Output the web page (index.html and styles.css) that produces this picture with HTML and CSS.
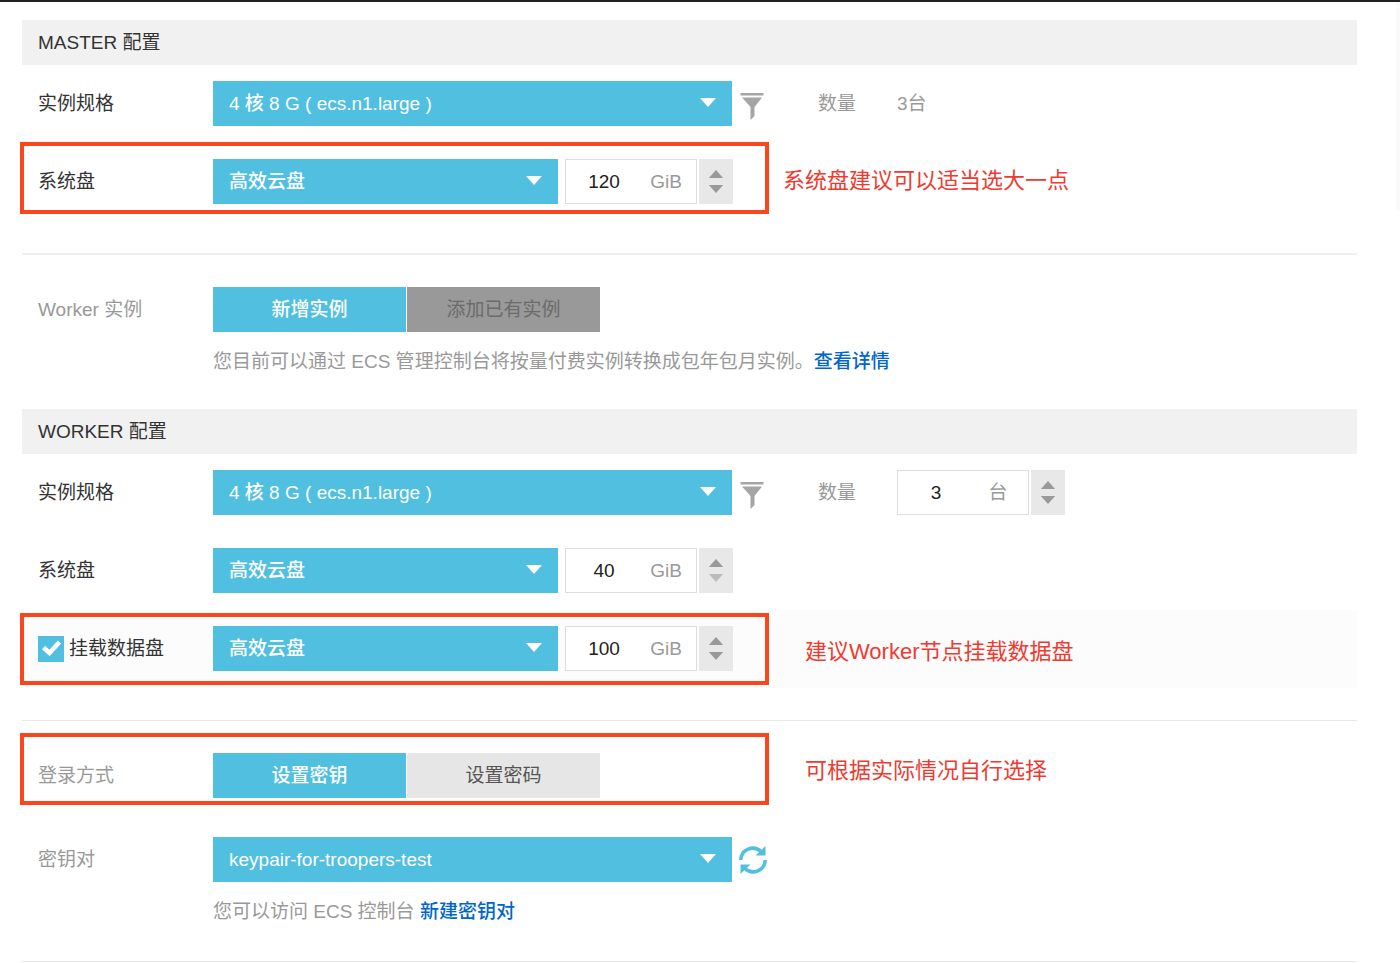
FILE: index.html
```html
<!DOCTYPE html>
<html lang="zh-CN">
<head>
<meta charset="utf-8">
<meta name="viewport" content="width=device-width, initial-scale=1">
<title>集群配置</title>
<link rel="stylesheet" href="styles.css">
</head>
<body>
<svg class="defs" aria-hidden="true">
  <symbol id="caret" viewBox="0 0 16 9"><path d="M0 0h16L8 9z"/></symbol>
  <symbol id="caret-up" viewBox="0 0 16 9"><path d="M0 9h16L8 0z"/></symbol>
  <symbol id="funnel" viewBox="0 0 23 28"><path d="M0 0h23v2.500H0zM1.500 4.500h20l-7.500 9.500v9l-4 4V14z"/></symbol>
</svg>
<main class="page">
  <form class="form">
    <section>
      <h2 class="heading">MASTER 配置</h2>
      <div class="row">
        <label class="label" for="m-type">实例规格</label>
        <div class="select wide"><select id="m-type"><option>4 核 8 G ( ecs.n1.large )</option></select><svg class="caret"><use href="#caret"/></svg></div>
        <button type="button" class="tool" aria-label="筛选"><svg class="funnel"><use href="#funnel"/></svg></button>
        <span class="count-label">数量</span>
        <span class="count">3台</span>
      </div>
      <div class="row marked marked-upper">
        <label class="label" for="m-disk">系统盘</label>
        <div class="select"><select id="m-disk"><option>高效云盘</option></select><svg class="caret"><use href="#caret"/></svg></div>
        <div class="stepper">
          <label class="amount"><input type="text" inputmode="numeric" value="120"><span>GiB</span></label>
          <div class="spin"><button type="button" aria-label="增加"><svg><use href="#caret-up"/></svg></button><button type="button" aria-label="减少"><svg><use href="#caret"/></svg></button></div>
        </div>
        <p class="note note-near">系统盘建议可以适当选大一点</p>
      </div>
    </section>

    <section class="divided">
      <div class="row">
        <span class="label muted" id="w-mode">Worker 实例</span>
        <div class="field">
          <div class="tabs" role="group" aria-labelledby="w-mode"><button type="button" class="active">新增实例</button><button type="button" class="off" disabled>添加已有实例</button></div>
          <p class="help">您目前可以通过 ECS 管理控制台将按量付费实例转换成包年包月实例。<a href="#">查看详情</a></p>
        </div>
      </div>
    </section>

    <section>
      <h2 class="heading">WORKER 配置</h2>
      <div class="row">
        <label class="label" for="w-type">实例规格</label>
        <div class="select wide"><select id="w-type"><option>4 核 8 G ( ecs.n1.large )</option></select><svg class="caret"><use href="#caret"/></svg></div>
        <button type="button" class="tool" aria-label="筛选"><svg class="funnel"><use href="#funnel"/></svg></button>
        <label class="count-label" for="w-count">数量</label>
        <div class="stepper count">
          <label class="amount"><input id="w-count" type="text" inputmode="numeric" value="3"><span>台</span></label>
          <div class="spin"><button type="button" aria-label="增加"><svg><use href="#caret-up"/></svg></button><button type="button" aria-label="减少"><svg><use href="#caret"/></svg></button></div>
        </div>
      </div>
      <div class="row">
        <label class="label" for="w-disk">系统盘</label>
        <div class="select"><select id="w-disk"><option>高效云盘</option></select><svg class="caret"><use href="#caret"/></svg></div>
        <div class="stepper">
          <label class="amount"><input type="text" inputmode="numeric" value="40"><span>GiB</span></label>
          <div class="spin"><button type="button" aria-label="增加"><svg><use href="#caret-up"/></svg></button><button type="button" aria-label="减少" disabled><svg><use href="#caret"/></svg></button></div>
        </div>
      </div>
      <div class="row tinted marked marked-lower">
        <label class="label check"><span class="box"><input type="checkbox" checked><svg viewBox="0 0 26 26"><path d="M5.500 11.500l6 5.500L21.500 6"/></svg></span>挂载数据盘</label>
        <div class="select"><select aria-label="数据盘类型"><option>高效云盘</option></select><svg class="caret"><use href="#caret"/></svg></div>
        <div class="stepper">
          <label class="amount"><input type="text" inputmode="numeric" value="100"><span>GiB</span></label>
          <div class="spin"><button type="button" aria-label="增加"><svg><use href="#caret-up"/></svg></button><button type="button" aria-label="减少"><svg><use href="#caret"/></svg></button></div>
        </div>
        <p class="note note-low">建议Worker节点挂载数据盘</p>
      </div>
    </section>

    <section class="divided thin">
      <div class="row marked marked-top">
        <span class="label muted" id="login">登录方式</span>
        <div class="tabs" role="group" aria-labelledby="login"><button type="button" class="active">设置密钥</button><button type="button">设置密码</button></div>
        <p class="note note-far">可根据实际情况自行选择</p>
      </div>
      <div class="row key-row">
        <label class="label muted" for="key">密钥对</label>
        <div class="field">
          <div class="line">
            <div class="select wide"><select id="key"><option>keypair-for-troopers-test</option></select><svg class="caret"><use href="#caret"/></svg></div>
            <button type="button" class="tool" aria-label="刷新"><svg class="refresh" viewBox="0 0 28 28"><path class="arc" d="M1.800 14A12 12 0 0 1 22 5.500M26.200 14A12 12 0 0 1 6 22.500"/><path class="tip" d="M26.500 0v9.500H16.500zM1.500 28V18.500h10z"/></svg></button>
          </div>
          <p class="help">您可以访问 ECS 控制台 <a href="#">新建密钥对</a></p>
        </div>
      </div>
    </section>
    <hr class="end">
  </form>
</main>
</body>
</html>
```
FILE: styles.css
```css
*,
*::after {
  box-sizing: border-box;
}

body {
  margin: 0;
  background: #fff;
  color: #333;
  font: 19px/28px "Liberation Sans", "Noto Sans CJK SC", sans-serif;
}

button,
input,
select {
  margin: 0;
  padding: 0;
  border: 0;
  border-radius: 0;
  background: none;
  color: inherit;
  font: inherit;
}

p {
  margin: 0;
}

a {
  color: #06c;
  font-weight: 500;
  text-decoration: none;
}

.defs {
  position: absolute;
  width: 0;
  height: 0;
}

.page {
  position: relative;
  border-top: 2px solid #231f20;
  padding: 18px 43px 0 22px;
}

/* faint scrollbar track on the window edge */
.page::after {
  content: "";
  position: absolute;
  top: 0;
  right: 0;
  width: 4px;
  height: 208px;
  background: #fafafa;
}

.heading {
  margin: 0;
  height: 45px;
  padding-left: 16px;
  background: #f1f1f1;
  font-size: 19px;
  font-weight: 400;
  line-height: 45px;
}

.row {
  position: relative;
  display: flex;
  align-items: flex-start;
  padding: 16px 0 17px 16px;
}

.tinted {
  background: #fcfcfc;
}

.label {
  flex: none;
  width: 175px;
  height: 45px;
  line-height: 46px;
}

.muted {
  color: #999;
}

.divided {
  margin-top: 32px;
  border-top: 2px solid #f0f0f0;
  padding-top: 16px;
}

.thin {
  border-top: 1px solid #e8e8e8;
}

.select {
  position: relative;
  flex: none;
  width: 345px;
  height: 45px;
  background: #50bfe0;
}

.wide {
  width: 519px;
}

.select select {
  appearance: none;
  width: 100%;
  height: 100%;
  padding: 1px 48px 0 16px;
  color: #fff;
  font-weight: 500;
}

.caret {
  position: absolute;
  top: 17px;
  right: 16px;
  width: 16px;
  height: 9px;
  fill: #fff;
  pointer-events: none;
}

.tool {
  flex: none;
  display: flex;
  align-items: center;
  width: 86px;
  height: 45px;
  padding-left: 7px;
}

.funnel {
  width: 26px;
  height: 28px;
  margin-top: 6px;
  fill: #a5a5a5;
}

.refresh {
  width: 28px;
  height: 28px;
}

.refresh .arc {
  fill: none;
  stroke: #50bfe0;
  stroke-width: 3.500;
}

.refresh .tip {
  fill: #50bfe0;
}

.count-label {
  flex: none;
  width: 79px;
  height: 45px;
  color: #999;
  line-height: 46px;
}

span.count {
  height: 45px;
  color: #999;
  line-height: 46px;
}

.stepper {
  flex: none;
  display: flex;
  gap: 2px;
  height: 45px;
  margin-left: 7px;
}

.stepper.count {
  margin-left: 0;
}

.amount {
  display: flex;
  width: 132px;
  border: 1px solid #ddd;
  background: #fff;
  color: #999;
  line-height: 43px;
  text-align: center;
}

.amount input {
  width: 76px;
  color: #222;
  text-align: center;
}

.amount span {
  width: 48px;
}

.spin {
  display: flex;
  flex-direction: column;
  width: 34px;
  padding: 8px 0;
  background: #e8e8e8;
}

.spin button {
  flex: 1;
  display: grid;
  place-items: center;
}

.spin svg {
  width: 16px;
  height: 8px;
  fill: #999;
}

.spin button:disabled svg {
  fill: #bbb;
}

.tabs {
  display: flex;
  gap: 1px;
}

.tabs button {
  width: 193px;
  height: 45px;
  background: #e6e6e6;
  color: #555;
}

.tabs .active {
  background: #50bfe0;
  color: #fff;
  font-weight: 500;
}

.tabs .off {
  background: #999;
  color: #6b6b6b;
}

.field {
  flex: 1;
}

.line {
  display: flex;
}

.help {
  margin: 16px 0;
  color: #999;
}

.check {
  display: flex;
  align-items: center;
  gap: 5px;
}

.box {
  display: grid;
  width: 26px;
  height: 26px;
}

.box input,
.box svg {
  grid-area: 1 / 1;
  width: 26px;
  height: 26px;
}

.box input {
  appearance: none;
  background: #50bfe0;
}

.box svg {
  fill: none;
  stroke: #fff;
  stroke-width: 4.500;
  pointer-events: none;
}

/* red frame drawn over a highlighted row */
.marked::after {
  content: "";
  position: absolute;
  left: -2px;
  width: 749px;
  height: 72px;
  border: 4px solid #f9461c;
  pointer-events: none;
}

.marked-upper::after {
  top: -1px;
}

.marked-lower::after {
  top: 3px;
}

.marked-top::after {
  top: -4px;
}

.note {
  color: #f03a30;
  font-size: 22px;
  line-height: 44px;
}

.note-near {
  margin-left: 50px;
}

.note-low {
  margin: 4px 0 -4px 72px;
}

.note-far {
  margin: -4px 0 4px 205px;
}

.key-row {
  padding-top: 22px;
}

.end {
  margin: 2px 0 0;
  border: 0;
  border-top: 1px solid #e8e8e8;
}
```
